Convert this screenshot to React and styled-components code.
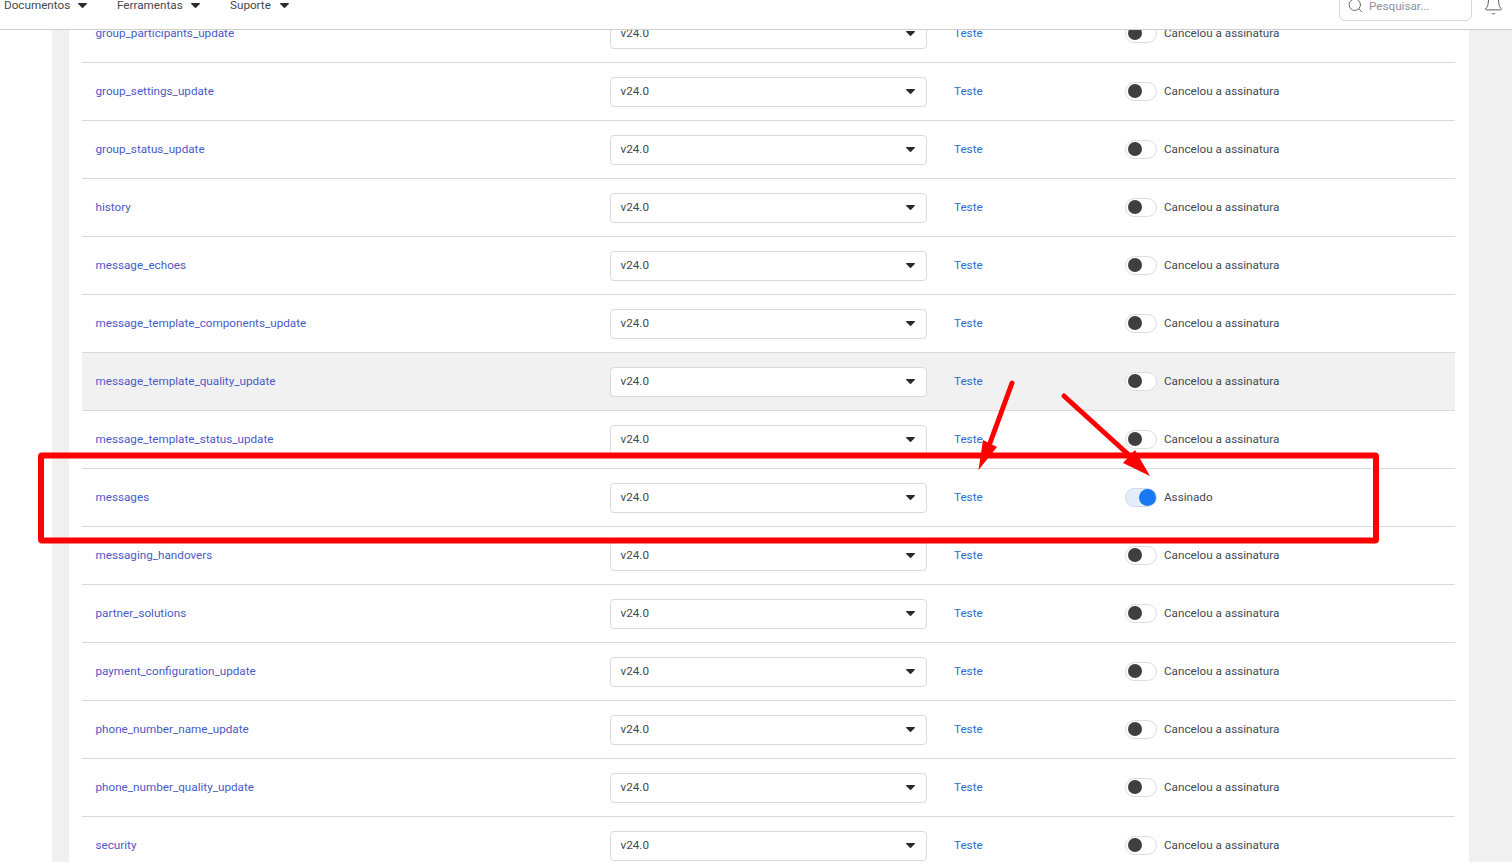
import React from 'react';
import styled, { createGlobalStyle } from 'styled-components';
import { Search, Bell } from 'lucide-react';

const GlobalStyle = createGlobalStyle`
  html, body { margin: 0; padding: 0; background: #ffffff; }
  body { font-family: Roboto, "Liberation Sans", sans-serif; }
`;

const Page = styled.div`
  position: relative;
  height: 862px;
  overflow: hidden;
  padding-left: 52px;
  background: #ffffff;
`;

const TopBar = styled.header`
  position: absolute;
  top: 0;
  left: 0;
  right: 0;
  z-index: 2;
  height: 30px;
  box-sizing: border-box;
  border-bottom: 1px solid #cfcfcf;
  background: #ffffff;
  overflow: hidden;
`;

const TopBarInner = styled.div`
  display: flex;
  align-items: center;
  height: 32px;
  margin-top: -11px;
  padding: 0 8px 0 4px;
`;

const NavItem = styled.div`
  display: flex;
  align-items: center;
  width: ${props => props.width}px;
  font-size: 11.7px;
  color: #444950;
`;

const Caret = styled.svg`
  width: 9px;
  height: 5px;
  flex: none;
  margin-left: ${props => props.offset || 0}px;
`;

const SearchBox = styled.div`
  display: flex;
  align-items: center;
  gap: 5px;
  width: 133px;
  height: 32px;
  box-sizing: border-box;
  margin-left: auto;
  padding-left: 7px;
  border: 1px solid #d6d6d6;
  border-radius: 6px;
  font-size: 11.7px;
  color: #8d949e;
`;

const SearchHint = styled.span`
  padding-top: 2px;
`;

const BellButton = styled.div`
  display: flex;
  margin-left: 11px;
  color: #555;
`;

const Backdrop = styled.main`
  height: 100%;
  padding: 0 43px 0 17px;
  background: #f0f0f0;
`;

const Card = styled.section`
  height: 100%;
  box-sizing: border-box;
  padding: 5px 14px 0 13px;
  background: #ffffff;
`;

const Row = styled.div`
  display: grid;
  grid-template-columns: 528px 317px 198px 1fr;
  align-items: center;
  height: 58px;
  box-sizing: border-box;
  border-bottom: 1px solid #dadada;
  background: ${props => (props.$hover ? '#f1f1f1' : 'transparent')};
  font-size: 11.7px;
  line-height: 14px;
`;

const FieldName = styled.a`
  padding-left: 13.5px;
  margin-top: -1px;
  color: #4a5ac8;
`;

const VersionSelect = styled.div`
  display: flex;
  align-items: center;
  justify-content: space-between;
  height: 30px;
  box-sizing: border-box;
  padding: 0 11px 1px 9.5px;
  border: 1px solid #dadada;
  border-radius: 4px;
  background: #ffffff;
  color: #444950;
`;

const TestLink = styled.a`
  padding-left: 27px;
  margin-top: -1px;
  color: #2f6bd0;
`;

const SubscribeCell = styled.div`
  display: flex;
  align-items: center;
  gap: 7px;
  color: #444950;
`;

const Toggle = styled.div`
  display: flex;
  align-items: center;
  justify-content: ${props => (props.$on ? 'flex-end' : 'flex-start')};
  width: 32px;
  height: 19px;
  box-sizing: border-box;
  margin-bottom: 1px;
  padding: 0 ${props => (props.$on ? '0' : '2px')};
  border: 1px solid ${props => (props.$on ? '#cfd8e6' : '#dcdcdc')};
  border-radius: 10px;
  background: ${props => (props.$on ? '#e4eefb' : '#ffffff')};
`;

const Knob = styled.span`
  flex: none;
  width: ${props => (props.$on ? 17 : 14)}px;
  height: ${props => (props.$on ? 17 : 14)}px;
  border-radius: 50%;
  background: ${props => (props.$on ? '#1877f2' : '#3f3f3f')};
`;

const SubscribeLabel = styled.span`
  margin-top: -2px;
`;

const Annotation = styled.svg`
  position: absolute;
  top: 0;
  left: 0;
  z-index: 3;
  width: 1512px;
  height: 862px;
  pointer-events: none;
`;

const fields = [
  'group_participants_update',
  'group_settings_update',
  'group_status_update',
  'history',
  'message_echoes',
  'message_template_components_update',
  'message_template_quality_update',
  'message_template_status_update',
  'messages',
  'messaging_handovers',
  'partner_solutions',
  'payment_configuration_update',
  'phone_number_name_update',
  'phone_number_quality_update',
  'security',
];

const CaretIcon = ({ offset }) => (
  <Caret viewBox="0 0 9 5" offset={offset}>
    <path d="M0.6 0h7.8c.5 0 .8.6.4 1L5 4.7c-.3.3-.7.3-1 0L.2 1C-.2.6.1 0 .6 0z" fill="#2b2b2b" />
  </Caret>
);

const App = () => (
  <Page>
    <GlobalStyle />
    <TopBar>
      <TopBarInner>
        <NavItem width={113}>Documentos<CaretIcon offset={8} /></NavItem>
        <NavItem width={113}>Ferramentas<CaretIcon offset={8} /></NavItem>
        <NavItem width={113}>Suporte<CaretIcon offset={9} /></NavItem>
        <SearchBox>
          <Search size={17} strokeWidth={1.2} color="#555" />
          <SearchHint>Pesquisar...</SearchHint>
        </SearchBox>
        <BellButton>
          <Bell size={21} strokeWidth={1.1} />
        </BellButton>
      </TopBarInner>
    </TopBar>
    <Backdrop>
      <Card>
        {fields.map(name => {
          const on = name === 'messages';
          return (
            <Row key={name} $hover={name === 'message_template_quality_update'}>
              <FieldName>{name}</FieldName>
              <VersionSelect>
                v24.0
                <CaretIcon />
              </VersionSelect>
              <TestLink>Teste</TestLink>
              <SubscribeCell>
                <Toggle $on={on}><Knob $on={on} /></Toggle>
                <SubscribeLabel>{on ? 'Assinado' : 'Cancelou a assinatura'}</SubscribeLabel>
              </SubscribeCell>
            </Row>
          );
        })}
      </Card>
    </Backdrop>
    <Annotation viewBox="0 0 1512 862">
      <rect x="41" y="455.5" width="1335" height="85" rx="1" fill="none" stroke="#ff0000" strokeWidth="6" />
      <path d="M1012 383L990 443" stroke="#ff0000" strokeWidth="5" strokeLinecap="round" fill="none" />
      <polygon points="978.5,470 983,440 997,447" fill="#ff0000" />
      <path d="M1064 396L1130 456" stroke="#ff0000" strokeWidth="5" strokeLinecap="round" fill="none" />
      <polygon points="1150,476 1123,463 1135,450" fill="#ff0000" />
    </Annotation>
  </Page>
);

export default App;
